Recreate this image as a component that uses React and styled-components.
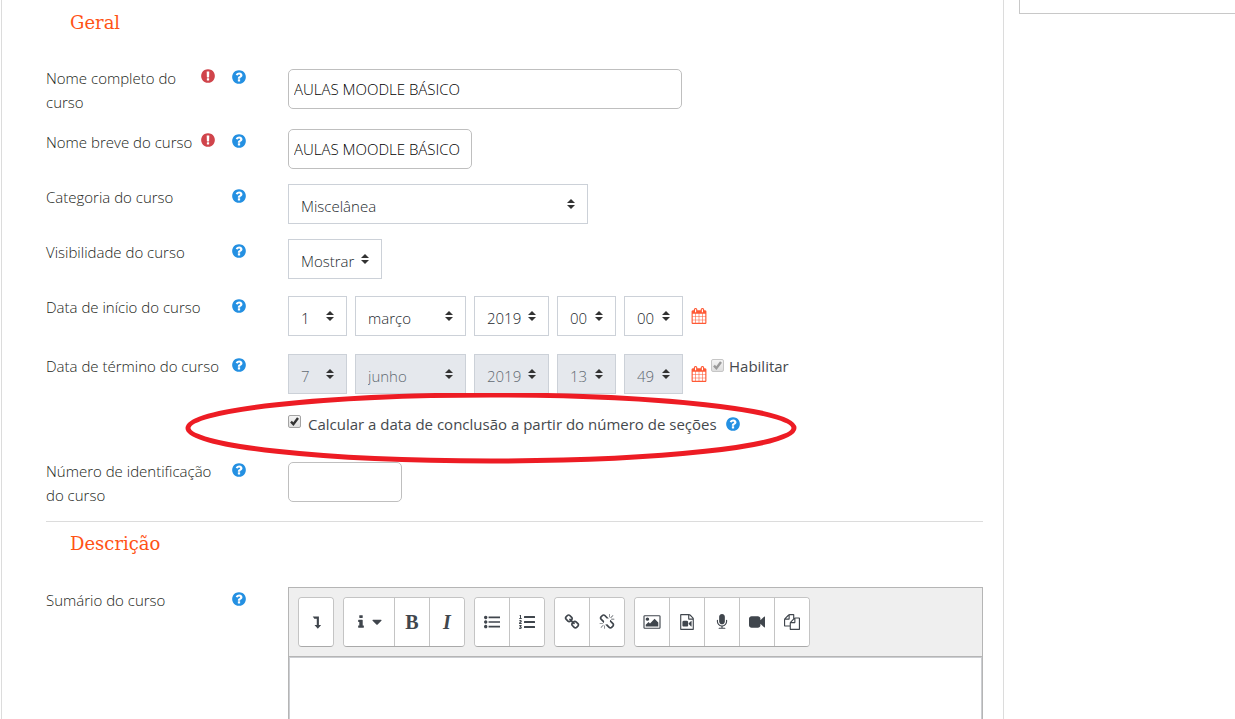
import React from 'react'
import styled, { createGlobalStyle } from 'styled-components'
import { FaListOl } from 'react-icons/fa'

const GlobalStyle = createGlobalStyle`
* {
  box-sizing: border-box;
}
html {
  scrollbar-width: none;
}
body {
  margin: 0;
  background: #fff;
  color: #1b1e20;
  font-family: 'Open Sans', 'Noto Sans', sans-serif;
  font-size: 15px;
  font-weight: 300;
  line-height: 24px;
}
`
const Page = styled.div`
  display: grid;
  grid-template-columns: 1fr 216px;
  column-gap: 15px;
  padding-left: 1px;
  min-height: 100vh;
`
const Main = styled.main`
  min-width: 0;
  padding: 11px 20px 24px 44px;
  border: solid #dcdcdc;
  border-width: 0 1px;
`
const Block = styled.aside`
  height: 14px;
  border: solid #c8c8c8;
  border-width: 0 0 1px 1px;
`
const Section = styled.section`
  & + & {
    border-top: 1px solid #dcdcdc;
    padding-top: 10px;
  }
`
const Title = styled.h3`
  margin: 0 0 31px;
  padding-left: 24px;
  font-family: 'DejaVu Serif', serif;
  font-size: 18px;
  font-weight: 400;
  line-height: 24px;
  color: #ff5316;
`
const Row = styled.div`
  position: relative;
  display: grid;
  grid-template-columns: 242px minmax(0, 1fr);
  align-items: start;
  margin-bottom: ${props => props.$gap || 15}px;
`
const LabelCell = styled.div`
  display: flex;
  gap: 6px;
  padding: ${props => (props.$wrapped ? 0 : 1)}px 41px 0 0;
`
const LabelText = styled.label`
  flex: 1;
`
const Icons = styled.span`
  display: flex;
  gap: 15px;
  height: 21px;
  align-items: center;
`
const Control = styled.div`
  display: flex;
  align-items: flex-start;
  gap: 8px;
  padding-top: ${props => props.$offset || 0}px;
  grid-column: 2;
`
const IconButton = styled.button`
  display: flex;
  align-self: ${props => (props.$middle ? 'center' : 'auto')};
  padding: 0;
  border: 0;
  background: none;
  color: ${props => props.$color};
  cursor: pointer;
`
const Required = styled.span`
  display: flex;
  color: #d0444b;
  height: 18px;
`
const Input = styled.input`
  width: ${props => props.$width}px;
  height: 40px;
  padding: 0 5px;
  border: 1px solid #bfbfbf;
  border-radius: 5px;
  background: #fff;
  color: #000;
  font: inherit;
`
const Select = styled.select`
  appearance: none;
  width: ${props => props.$width}px;
  height: 40px;
  padding: 4px 20px 0 12px;
  border: 1px solid #ccd1d8;
  border-radius: 0;
  background: #fff url("data:image/svg+xml,%3Csvg xmlns='http://www.w3.org/2000/svg' viewBox='0 0 4 5'%3E%3Cpath fill='%23333' d='M2 0L0 2h4zm0 5L0 3h4z'/%3E%3C/svg%3E") no-repeat right 12px center;
  background-size: 8px 10px;
  color: #23282d;
  font: inherit;
  opacity: 1;
  &:disabled {
    background-color: #e5e8ed;
    color: #626a72;
  }
`
const EndOfDate = styled.div`
  display: flex;
  gap: 4px;
  height: 40px;
`
const CheckLabel = styled.label`
  display: flex;
  gap: ${props => props.$gap}px;
  color: #45494d;
  font-weight: 400;
`
const Checkbox = styled.input`
  appearance: none;
  width: 13px;
  height: 13px;
  margin: ${props => (props.disabled ? 5 : 3)}px 0 0;
  border: 1px solid ${props => (props.disabled ? '#c6c6c6' : '#a3a3a3')};
  border-radius: 2px;
  background: linear-gradient(#f4f4f4, #dedede);
  &:checked {
    background: url("data:image/svg+xml,%3Csvg xmlns='http://www.w3.org/2000/svg' viewBox='0 0 11 11'%3E%3Cpath fill='none' stroke='${props => (props.disabled ? '%239a9a9a' : '%23333')}' stroke-width='2.4' d='M2 5.6l2.4 2.6L9 2'/%3E%3C/svg%3E"), linear-gradient(#f4f4f4, #dedede);
  }
`
const Ring = styled.svg`
  position: absolute;
  left: 139px;
  top: -19px;
  pointer-events: none;
`
const Editor = styled.div`
  flex: 1;
  min-width: 0;
  border: 1px solid #b5b5b5;
`
const Toolbar = styled.div`
  display: flex;
  flex-wrap: wrap;
  gap: 9px;
  padding: 9px;
  border-bottom: 1px solid #b5b5b5;
  background: #efefef;
`
const Group = styled.div`
  display: flex;
  border: 1px solid #c4c4c4;
  border-bottom-color: #a9a9a9;
  border-radius: 4px;
  background: #fff;
  overflow: hidden;
`
const Tool = styled.button`
  display: flex;
  align-items: center;
  justify-content: center;
  width: ${props => (props.$wide ? 50 : 34)}px;
  height: 48px;
  padding: 0;
  border: 0;
  background: #fff;
  color: #40464d;
  font-family: 'Liberation Serif', serif;
  font-size: 20px;
  font-weight: 700;
  font-style: ${props => (props.$italic ? 'italic' : 'normal')};
  & + & {
    width: 35px;
    border-left: 1px solid #c4c4c4;
  }
`
const TextArea = styled.textarea`
  display: block;
  width: 100%;
  height: 240px;
  border: 1px solid #ccced2;
  outline: 0;
  resize: none;
  font: inherit;
`

const paths = {
  help: 'M1024 1376v-192q0-14-9-23t-23-9h-192q-14 0-23 9t-9 23v192q0 14 9 23t23 9h192q14 0 23-9t9-23zm256-672q0-88-55.5-163t-138.5-116-170-41q-243 0-371 213-15 24 8 42l132 100q7 6 19 6 16 0 25-12 53-68 86-92 34-24 86-24 48 0 85.5 26t37.5 59q0 38-20 61t-68 45q-63 28-115.5 86.5t-52.5 125.5v36q0 14 9 23t23 9h192q14 0 23-9t9-23q0-19 21.5-49.5t54.5-49.5q32-18 49-28.5t46-35 44.5-48 28-60.5 12.5-81zm384 192q0 209-103 385.5t-279.5 279.5-385.5 103-385.5-103-279.5-279.5-103-385.5 103-385.5 279.5-279.5 385.5-103 385.5 103 279.5 279.5 103 385.5z',
  required: 'M896 128q209 0 385.5 103t279.5 279.5 103 385.5-103 385.5-279.5 279.5-385.5 103-385.5-103-279.5-279.5-103-385.5 103-385.5 279.5-279.5 385.5-103zm128 1247v-190q0-14-9-23.5t-22-9.5h-192q-13 0-23 10t-10 23v190q0 13 10 23t23 10h192q13 0 22-9.5t9-23.5zm-2-344l18-621q0-12-10-18-10-8-24-8h-220q-14 0-24 8-10 6-10 18l17 621q0 10 10 17.5t24 7.5h185q14 0 23.5-7.5t10.5-17.5z',
  calendar: 'M192 1664h288v-288h-288v288zm352 0h320v-288h-320v288zm-352-352h288v-320h-288v320zm352 0h320v-320h-320v320zm-352-384h288v-288h-288v288zm736 736h320v-288h-320v288zm-384-736h320v-288h-320v288zm768 736h288v-288h-288v288zm-384-352h320v-320h-320v320zm-352-864v-288q0-13-9.5-22.5t-22.5-9.5h-64q-13 0-22.5 9.5t-9.5 22.5v288q0 13 9.5 22.5t22.5 9.5h64q13 0 22.5-9.5t9.5-22.5zm736 864h288v-320h-288v320zm-384-384h320v-288h-320v288zm384 0h288v-288h-288v288zm32-480v-288q0-13-9.5-22.5t-22.5-9.5h-64q-13 0-22.5 9.5t-9.5 22.5v288q0 13 9.5 22.5t22.5 9.5h64q13 0 22.5-9.5t9.5-22.5zm384-64v1280q0 52-38 90t-90 38h-1408q-52 0-90-38t-38-90v-1280q0-52 38-90t90-38h128v-96q0-66 47-113t113-47h64q66 0 113 47t47 113v96h384v-96q0-66 47-113t113-47h64q66 0 113 47t47 113v96h128q52 0 90 38t38 90z',
  toggle: 'M448 192h736v1000h270l-400 460-400-460h274v-740h-290z',
  info: 'M1216 1344v128q0 26-19 45t-45 19h-512q-26 0-45-19t-19-45v-128q0-26 19-45t45-19h64v-384h-64q-26 0-45-19t-19-45v-128q0-26 19-45t45-19h384q26 0 45 19t19 45v576h64q26 0 45 19t19 45zm-128-1152v192q0 26-19 45t-45 19h-256q-26 0-45-19t-19-45v-192q0-26 19-45t45-19h256q26 0 45 19t19 45z',
  caret: 'M1408 704q0 26-19 45l-448 448q-19 19-45 19t-45-19l-448-448q-19-19-19-45t19-45 45-19h896q26 0 45 19t19 45z',
  list: 'M192 192a192 192 0 1 0 .1 0zM192 704a192 192 0 1 0 .1 0zM192 1216a192 192 0 1 0 .1 0zM512 288h1280v192h-1280zM512 800h1280v192h-1280zM512 1312h1280v192h-1280z',
  link: 'M1520 1216q0-40-28-68l-208-208q-28-28-68-28-42 0-72 32 3 3 19 18.5t21.5 21.5 15 19 13 25.5 3.5 27.5q0 40-28 68t-68 28q-15 0-27.5-3.5t-25.5-13-19-15-21.5-21.5-18.5-19q-33 31-33 73 0 40 28 68l206 207q27 27 68 27 40 0 68-26l147-146q28-28 28-67zm-703-705q0-40-28-68l-206-207q-28-28-68-28-39 0-68 27l-147 146q-28 28-28 67 0 40 28 68l208 208q27 27 68 27 42 0 72-31-3-3-19-18.5t-21.5-21.5-15-19-13-25.5-3.5-27.5q0-40 28-68t68-28q15 0 27.5 3.5t25.5 13 19 15 21.5 21.5 18.5 19q33-31 33-73zm895 705q0 120-85 203l-147 146q-83 83-203 83-121 0-204-85l-206-207q-83-83-83-203 0-123 88-209l-88-88q-86 88-208 88-120 0-204-84l-208-208q-84-84-84-204t85-203l147-146q83-83 203-83 121 0 204 85l206 207q83 83 83 203 0 123-88 209l88 88q86-88 208-88 120 0 204 84l208 208q84 84 84 204z',
  unlink: 'M503 1271l-256 256q-10 9-23 9-12 0-23-9-9-10-9-23t9-23l256-256q10-9 23-9t23 9q9 10 9 23t-9 23zm169 41v320q0 14-9 23t-23 9-23-9-9-23v-320q0-14 9-23t23-9 23 9 9 23zm-224-224q0 14-9 23t-23 9h-320q-14 0-23-9t-9-23 9-23 23-9h320q14 0 23 9t9 23zm1264 128q0 120-85 203l-147 146q-83 83-203 83-121 0-204-85l-334-335q-21-21-42-56l239-18 273 274q28 28 68 27.5t68-27.5l147-146q28-28 28-67 0-40-28-68l-274-275 18-239q35 21 56 42l336 336q84 86 84 204zm-617-724l-239 18-273-274q-28-28-68-28-39 0-68 27l-147 146q-28 28-28 67 0 40 28 68l274 274-18 240q-35-21-56-42l-336-336q-84-86-84-204 0-120 85-203l147-146q83-83 203-83 121 0 204 85l334 335q21 21 42 56zm633 84q0 14-9 23t-23 9h-320q-14 0-23-9t-9-23 9-23 23-9h320q14 0 23 9t9 23zm-544-544v320q0 14-9 23t-23 9-23-9-9-23v-320q0-14 9-23t23-9 23 9 9 23zm407 151l-256 256q-11 9-23 9t-23-9q-9-10-9-23t9-23l256-256q10-9 23-9t23 9q9 10 9 23t-9 23z',
  image: 'M576 576q0 80-56 136t-136 56-136-56-56-136 56-136 136-56 136 56 56 136zm1024 384v448h-1408v-192l320-320 160 160 512-512zm96-704h-1600q-13 0-22.5 9.5t-9.5 22.5v1216q0 13 9.5 22.5t22.5 9.5h1600q13 0 22.5-9.5t9.5-22.5v-1216q0-13-9.5-22.5t-22.5-9.5zm160 32v1216q0 66-47 113t-113 47h-1600q-66 0-113-47t-47-113v-1216q0-66 47-113t113-47h1600q66 0 113 47t47 113z',
  media: 'M1596 380q28 28 48 76t20 88v1152q0 40-28 68t-68 28h-1344q-40 0-68-28t-28-68v-1600q0-40 28-68t68-28h896q40 0 88 20t76 48zm-444-244v376h376q-10-29-22-41l-313-313q-12-12-41-22zm384 1528v-1024h-416q-40 0-68-28t-28-68v-416h-768v1536h1280zm-640-896q52 0 90 38t38 90v384q0 52-38 90t-90 38h-384q-52 0-90-38t-38-90v-384q0-52 38-90t90-38h384zm492 2q20 8 20 30v576q0 22-20 30-8 2-12 2-14 0-23-9l-265-266v-90l265-266q9-9 23-9 4 0 12 2z',
  mic: 'M1472 704v128q0 221-147.5 384.5t-364.5 187.5v132h256q26 0 45 19t19 45-19 45-45 19h-640q-26 0-45-19t-19-45 19-45 45-19h256v-132q-217-24-364.5-187.5t-147.5-384.5v-128q0-26 19-45t45-19 45 19 19 45v128q0 185 131.5 316.5t316.5 131.5 316.5-131.5 131.5-316.5v-128q0-26 19-45t45-19 45 19 19 45zm-256-384v512q0 132-94 226t-226 94-226-94-94-226v-512q0-132 94-226t226-94 226 94 94 226z',
  video: 'M1792 352v1088q0 42-39 59-13 5-25 5-27 0-45-19l-403-403v166q0 119-84.5 203.5t-203.5 84.5h-704q-119 0-203.5-84.5t-84.5-203.5v-704q0-119 84.5-203.5t203.5-84.5h704q119 0 203.5 84.5t84.5 203.5v165l403-402q18-19 45-19 12 0 25 5 39 17 39 59z',
  files: 'M1696 384q40 0 68 28t28 68v1216q0 40-28 68t-68 28h-960q-40 0-68-28t-28-68v-288h-544q-40 0-68-28t-28-68v-672q0-40 20-88t48-76l408-408q28-28 76-48t88-20h416q40 0 68 28t28 68v328q68-40 128-40h416zm-544 213l-299 299h299v-299zm-640-384l-299 299h299v-299zm196 647l316-316v-416h-384v416q0 40-28 68t-68 28h-416v640h512v-256q0-40 20-88t48-76zm956 804v-1152h-384v416q0 40-28 68t-68 28h-416v640h896z',
}

function Icon({ name, size = 16 }) {
  return (
    <svg width={size} height={size} viewBox="0 0 1792 1792" fill="currentColor" overflow="visible" aria-hidden="true">
      <path d={paths[name]} />
    </svg>
  )
}

function Help() {
  return (
    <IconButton type="button" $middle $color="#2490e2" aria-label="Ajuda"><Icon name="help" /></IconButton>
  )
}

function Field({ id, label, required, wrapped, offset, gap, children }) {
  return (
    <Row $gap={gap}>
      <LabelCell $wrapped={wrapped}>
        <LabelText htmlFor={id}>{label}</LabelText>
        <Icons>
          {required && <Required><Icon name="required" /></Required>}
          <Help />
        </Icons>
      </LabelCell>
      <Control $offset={wrapped ? 3 : offset}>{children}</Control>
    </Row>
  )
}

const dateParts = [
  { key: 'dia', width: 59 },
  { key: 'mês', width: 111 },
  { key: 'ano', width: 75 },
  { key: 'hora', width: 59 },
  { key: 'minuto', width: 59 },
]

function DateSelects({ id, values, disabled, children }) {
  return (
    <>
      {dateParts.map((part, i) => (
        <Select key={part.key} id={i === 0 ? id : undefined} aria-label={part.key} $width={part.width} disabled={disabled}>
          <option>{values[i]}</option>
        </Select>
      ))}
      <EndOfDate>
        <IconButton type="button" $middle $color="#ff5a36" aria-label="Calendário"><Icon name="calendar" /></IconButton>
        {children}
      </EndOfDate>
    </>
  )
}

const media = ['image', 'media', 'mic', 'video', 'files']

function App() {
  return (
    <>
      <GlobalStyle />
      <Page>
        <Main>
          <Section>
            <Title>Geral</Title>
            <Field id="fullname" label="Nome completo do curso" required wrapped gap={15}>
              <Input id="fullname" type="text" $width={394} defaultValue="AULAS MOODLE BÁSICO" />
            </Field>
            <Field id="shortname" label="Nome breve do curso" required>
              <Input id="shortname" type="text" $width={184} defaultValue="AULAS MOODLE BÁSICO" />
            </Field>
            <Field id="category" label="Categoria do curso">
              <Select id="category" $width={300}><option>Miscelânea</option></Select>
            </Field>
            <Field id="visible" label="Visibilidade do curso">
              <Select id="visible" $width={94}><option>Mostrar</option></Select>
            </Field>
            <Field id="start" label="Data de início do curso" offset={2} gap={17}>
              <DateSelects id="start" values={['1', 'março', '2019', '00', '00']} />
            </Field>
            <Field id="end" label="Data de término do curso" offset={1} gap={18}>
              <DateSelects id="end" values={['7', 'junho', '2019', '13', '49']} disabled>
                <CheckLabel $gap={5}>
                  <Checkbox type="checkbox" defaultChecked disabled />
                  Habilitar
                </CheckLabel>
              </DateSelects>
            </Field>
            <Row $gap={23}>
              <Control>
                <CheckLabel $gap={7}>
                  <Checkbox type="checkbox" defaultChecked />
                  Calcular a data de conclusão a partir do número de seções
                </CheckLabel>
                <Help />
              </Control>
              <Ring width="613" height="71" aria-hidden="true">
                <ellipse cx="306" cy="35" rx="303" ry="33" fill="none" stroke="#ed1c24" strokeWidth="5" />
              </Ring>
            </Row>
            <Field id="idnumber" label="Número de identificação do curso" wrapped gap={14}>
              <Input id="idnumber" type="text" $width={114} />
            </Field>
          </Section>
          <Section>
            <Title>Descrição</Title>
            <Field id="summary" label="Sumário do curso">
              <Editor>
                <Toolbar>
                  <Group>
                    <Tool type="button" aria-label="Mostrar mais botões"><Icon name="toggle" size={15} /></Tool>
                  </Group>
                  <Group>
                    <Tool type="button" $wide aria-label="Estilos de parágrafo">
                      <Icon name="info" />
                      <Icon name="caret" />
                    </Tool>
                    <Tool type="button">B</Tool>
                    <Tool type="button" $italic>I</Tool>
                  </Group>
                  <Group>
                    <Tool type="button" aria-label="Lista"><Icon name="list" /></Tool>
                    <Tool type="button" aria-label="Lista numerada"><FaListOl size={16} /></Tool>
                  </Group>
                  <Group>
                    <Tool type="button" aria-label="Link"><Icon name="link" /></Tool>
                    <Tool type="button" aria-label="Remover link"><Icon name="unlink" /></Tool>
                  </Group>
                  <Group>
                    {media.map(name => (
                      <Tool key={name} type="button" aria-label={name}><Icon name={name} /></Tool>
                    ))}
                  </Group>
                </Toolbar>
                <TextArea id="summary" />
              </Editor>
            </Field>
          </Section>
        </Main>
        <Block />
      </Page>
    </>
  )
}

export default App
